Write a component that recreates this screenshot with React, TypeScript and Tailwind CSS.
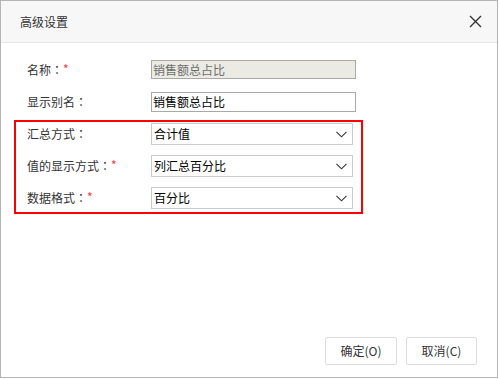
const font = { fontFamily: '"Noto Sans CJK SC", "Noto Sans", sans-serif' }
const colonFont = { fontFamily: '"Noto Sans CJK JP", sans-serif' }

function Label({ text, required }: { text: string; required?: boolean }) {
  return (
    <div className="w-[124px] shrink-0 text-[12px] text-[#333] leading-none flex items-center">
      <span>{text}</span>
      <span style={colonFont}>：</span>
      {required && <span className="text-[#f33] relative -top-[1px]">*</span>}
    </div>
  )
}

function Chevron() {
  return (
    <svg width="11" height="7" viewBox="0 0 11 7" className="mr-[5px]">
      <path d="M0.5 0.8 L5.5 5.8 L10.5 0.8" fill="none" stroke="#333" strokeWidth="1.1" />
    </svg>
  )
}

function SelectRow({ label, value, required }: { label: string; value: string; required?: boolean }) {
  return (
    <div className="flex items-center pl-[11px]">
      <Label text={label} required={required} />
      <div className="w-[202px] h-[22px] border border-[#ccc] bg-white flex items-center justify-between">
        <span className="pl-[2px] text-[12px] text-black leading-none">{value}</span>
        <Chevron />
      </div>
    </div>
  )
}

export default function App() {
  return (
    <div className="w-[499px] h-[379px] bg-white" style={font}>
      <div className="w-[498px] h-[378px] border border-[#b4b4b4] flex flex-col bg-white">
        <div className="h-[42px] shrink-0 bg-[#f7f7f7] border-b border-[#e6e6e6] flex items-center justify-between pl-[19px] pr-[15px]">
          <span className="text-[12px] text-[#333]">高级设置</span>
          <svg width="13" height="13" viewBox="0 0 13 13">
            <path d="M1 1 L12 12 M12 1 L1 12" stroke="#333" strokeWidth="1.4" />
          </svg>
        </div>

        <div className="pt-[17px] pl-[26px] flex flex-col gap-[13px]">
          <div className="flex items-center">
            <Label text="名称" required />
            <div className="w-[205px] h-[19px] border border-[#a9a9a9] bg-[#ebebe4] flex items-center pl-[1px] text-[12px] text-[#6d6d6d] leading-none">
              销售额总占比
            </div>
          </div>
          <div className="flex items-center">
            <Label text="显示别名" />
            <div className="w-[205px] h-[20px] border border-[#a9a9a9] bg-white flex items-center pl-[1px] text-[12px] text-black leading-none">
              销售额总占比
            </div>
          </div>
        </div>

        <div className="mt-[8px] ml-[13px] w-[349px] border-2 border-[#f00] pt-[1px] pb-[3px] flex flex-col gap-[10px]">
          <SelectRow label="汇总方式" value="合计值" />
          <SelectRow label="值的显示方式" value="列汇总百分比" required />
          <SelectRow label="数据格式" value="百分比" required />
        </div>

        <div className="flex-1" />

        <div className="flex justify-end gap-[9px] pr-[20px] pb-[12px]">
          <button className="w-[72px] h-[28px] border border-[#dcdcdc] rounded-[2px] bg-white text-[12px] text-[#333]">
            确定(O)
          </button>
          <button className="w-[71px] h-[28px] border border-[#dcdcdc] rounded-[2px] bg-white text-[12px] text-[#333]">
            取消(C)
          </button>
        </div>
      </div>
    </div>
  )
}
